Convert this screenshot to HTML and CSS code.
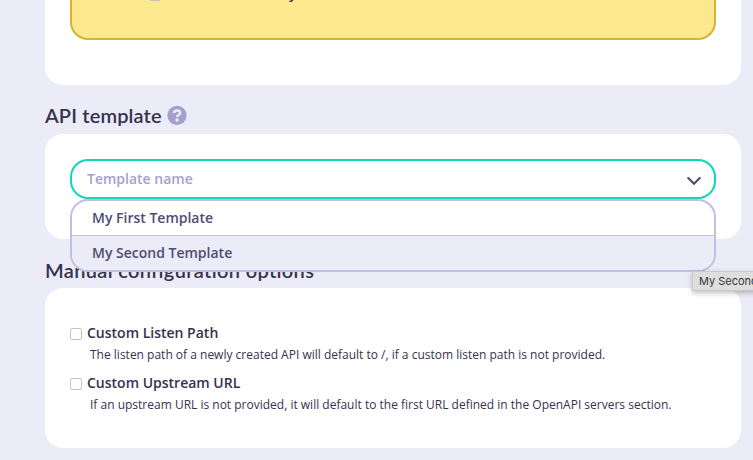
FILE: index.html
```
<!DOCTYPE html>
<html lang="en">
<head>
<meta charset="utf-8">
<title>API template</title>
<link rel="stylesheet" href="styles.css">
</head>
<body>
<main class="page">
  <section class="card card-top">
    <div class="notice"><span class="notice-check"></span><span class="notice-text">y</span></div>
  </section>
  <h2 class="heading heading-template"><span class="title title-template">API template</span>
    <svg class="help" viewBox="0 0 20 20" width="20" height="20"><circle cx="10" cy="10.4" r="9.6" fill="#a5a0cc"/><path d="M6.7 8C7.2 6.2 8.4 5.5 10 5.5c1.8 0 3.2 1 3.2 2.5 0 2.1-3 2-3 3.9" fill="none" stroke="#ecebf8" stroke-width="2.5"/><circle cx="10" cy="15" r="1.7" fill="#ecebf8"/></svg>
  </h2>
  <section class="card card-template">
    <div class="select">
      <div class="control"><span class="placeholder">Template name</span>
        <svg class="chevron" width="16" height="10" viewBox="0 0 16 10"><path d="M2.2 2 8 7.7 13.8 2" fill="none" stroke="#504c71" stroke-width="2.1" stroke-linecap="round"/></svg>
      </div>
      <ul class="menu"><li>My First Template</li><li class="active">My Second Template</li></ul>
    </div>
  </section>
  <h2 class="heading heading-manual"><span class="title title-manual">Manual configuration options</span></h2>
  <section class="card card-manual">
    <div class="option">
      <label class="label"><span class="check"></span><span class="label-text">Custom Listen Path</span></label>
      <p>The listen path of a newly created API will default to /, if a custom listen path is not provided.</p>
    </div>
    <div class="option">
      <label class="label"><span class="check"></span><span class="label-text">Custom Upstream URL</span></label>
      <p>If an upstream URL is not provided, it will default to the first URL defined in the OpenAPI servers section.</p>
    </div>
  </section>
  <div class="tooltip">My Second Template</div>
</main>
</body>
</html>
```
FILE: styles.css
```
* { box-sizing: border-box; }
body { margin: 0; background: #ecebf8; color: #36324d; font-family: "Open Sans", sans-serif; }
.page { position: relative; width: 753px; height: 460px; padding-left: 45px; overflow: hidden; }
.card { width: 696px; background: #fff; border-radius: 18px; padding: 25px; }
.card-top { height: 85px; padding-top: 0; border-radius: 0 0 18px 18px; }
.notice { position: relative; height: 40px; background: #fde98d; border: 2px solid #d5b42f; border-top: 0; border-radius: 0 0 18px 18px; overflow: hidden; }
.notice-check { position: absolute; left: 77px; top: -11px; width: 12px; height: 12px; border: 1px solid #c4c4c4; border-radius: 2px; background: #fff; }
.notice-text { position: absolute; left: 217px; top: -16px; font-size: 14px; font-weight: 600; line-height: 20px; }
.heading { margin: 0; display: flex; align-items: center; font-family: Lato, sans-serif; font-size: 20px; font-weight: 600; line-height: 24px; color: #36324d; }
.heading-template { height: 49px; padding-top: 13px; gap: 5px; }
.heading-manual { height: 49px; padding-top: 14px; }
.title { white-space: nowrap; padding-bottom: 2px; }
.title-template { letter-spacing: .14px; }
.title-manual { letter-spacing: .34px; }
.help { margin-top: -2px; }
.card-template { height: 105px; }
.select { position: relative; }
.control { height: 40px; border: 2px solid #0cd9b9; border-radius: 18px; padding: 0 12px 0 15px; display: flex; align-items: center; justify-content: space-between; font-size: 14px; font-weight: 600; color: #a5a0cc; }
.placeholder { padding-bottom: 2px; }
.chevron { margin-top: 3px; }
.menu { position: absolute; z-index: 2; top: 40px; left: 0; width: 100%; height: 73px; margin: 0; padding: 0; list-style: none; background: #fff; border: 2px solid #c3bfe3; border-radius: 18px; overflow: hidden; }
.menu li { height: 34px; padding-left: 20px; font-size: 14px; font-weight: 600; line-height: 34px; color: #504c71; }
.menu .active { height: 35px; background: #ecebf8; border-top: 1px solid #c3bfe3; }
.card-manual { height: 160px; padding-top: 35px; }
.option { height: 50px; }
.label { display: flex; align-items: center; gap: 5px; height: 21px; font-size: 14px; font-weight: 600; white-space: nowrap; }
.label-text { padding-bottom: 2px; }
.check { width: 12px; height: 12px; border: 1px solid #c4c4c4; border-radius: 2px; margin-top: 1px; background: #fff; }
.option p { margin: 1px 0 0 20px; font-size: 12px; line-height: 20px; white-space: nowrap; }
.tooltip { position: absolute; z-index: 3; left: 692px; top: 271px; height: 20px; padding: 0 6px; background: #dfdede; border: 1px solid #c9c8cc; box-shadow: 0 2px 5px rgba(0,0,0,.25); font: 11px/18px Inter, sans-serif; color: #363636; white-space: nowrap; }
```
